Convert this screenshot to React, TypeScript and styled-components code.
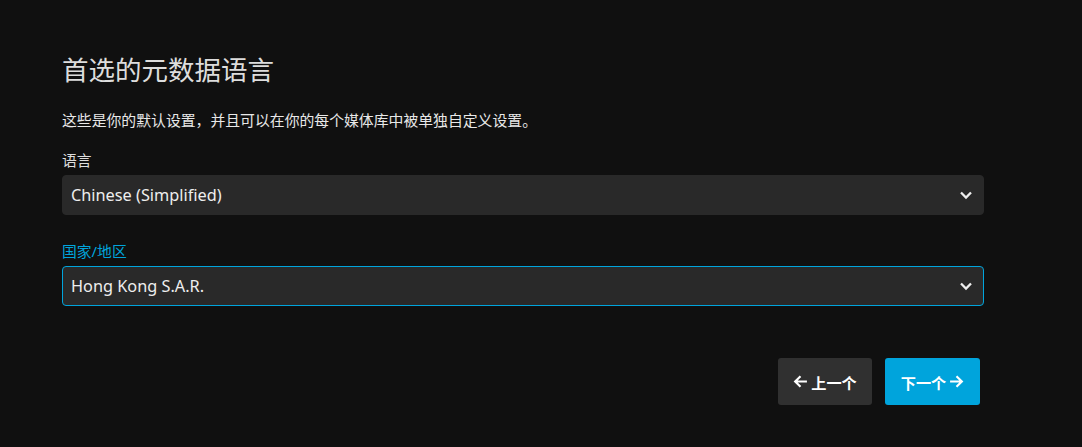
import styled, { createGlobalStyle } from "styled-components";

const GlobalStyle = createGlobalStyle`
  html, body {
    margin: 0;
    padding: 0;
    background: #101010;
  }
  body {
    font-family: "Noto Sans", "Noto Sans CJK SC", sans-serif;
    color: #ddd;
  }
`;

const Page = styled.div`
  width: 922px;
  padding: 48px 0 0 62px;
  display: flex;
  flex-direction: column;
`;

const Title = styled.h1`
  margin: 0;
  font-size: 26.5px;
  font-weight: 400;
  line-height: 44px;
  color: #ddd;
`;

const Description = styled.p`
  margin: 16px 0 0;
  font-size: 14.85px;
  line-height: 24px;
  color: #e8e8e8;
`;

const Field = styled.div<{ $gap: number }>`
  margin-top: ${(p) => p.$gap}px;
  display: flex;
  flex-direction: column;
`;

const Label = styled.label<{ $active?: boolean }>`
  font-size: 14.8px;
  line-height: 20px;
  margin-bottom: 5px;
  color: ${(p) => (p.$active ? "#00a4dc" : "#ddd")};
`;

const SelectBox = styled.div<{ $active?: boolean }>`
  height: 40px;
  box-sizing: border-box;
  border-radius: 4px;
  background: #292929;
  border: 1px solid ${(p) => (p.$active ? "#00a4dc" : "#292929")};
  display: flex;
  align-items: center;
  justify-content: space-between;
  padding: 0 9px 0 8px;
  font-size: 16.3px;
  color: #eee;
`;

const Buttons = styled.div`
  margin-top: 52px;
  display: flex;
  justify-content: flex-end;
  gap: 13px;
  padding-right: 4px;
`;

const Button = styled.button<{ $primary?: boolean }>`
  height: 47px;
  width: ${(p) => (p.$primary ? 95 : 94)}px;
  padding: 0;
  border: none;
  border-radius: 3px;
  background: ${(p) => (p.$primary ? "#00a4dc" : "#303030")};
  color: #fff;
  font-family: "Noto Sans", "Noto Sans CJK SC", sans-serif;
  font-size: 15.2px;
  font-weight: 700;
  display: flex;
  align-items: center;
  justify-content: center;
  gap: 3px;
`;

const Chevron = () => (
  <svg width="16" height="16" viewBox="0 0 16 16">
    <path d="M3 5.5 L8 10.5 L13 5.5" fill="none" stroke="#eee" strokeWidth="2.3" />
  </svg>
);

const Arrow = ({ dir }: { dir: "left" | "right" }) => (
  <svg width="15" height="15" viewBox="0 0 14 14">
    {dir === "left" ? (
      <path d="M13 7 H2 M7 2 L2 7 L7 12" fill="none" stroke="#fff" strokeWidth="2" />
    ) : (
      <path d="M1 7 H12 M7 2 L12 7 L7 12" fill="none" stroke="#fff" strokeWidth="2" />
    )}
  </svg>
);

export default function App() {
  return (
    <>
      <GlobalStyle />
      <Page>
        <Title>首选的元数据语言</Title>
        <Description>这些是你的默认设置，并且可以在你的每个媒体库中被单独自定义设置。</Description>
        <Field $gap={18}>
          <Label>语言</Label>
          <SelectBox>
            <span>Chinese (Simplified)</span>
            <Chevron />
          </SelectBox>
        </Field>
        <Field $gap={26}>
          <Label $active>国家/地区</Label>
          <SelectBox $active>
            <span>Hong Kong S.A.R.</span>
            <Chevron />
          </SelectBox>
        </Field>
        <Buttons>
          <Button>
            <Arrow dir="left" />
            上一个
          </Button>
          <Button $primary>
            下一个
            <Arrow dir="right" />
          </Button>
        </Buttons>
      </Page>
    </>
  );
}
